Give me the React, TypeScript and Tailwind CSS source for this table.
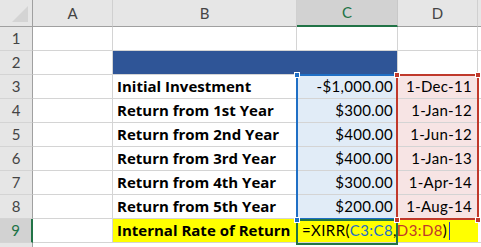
import React from 'react';

const COLS = ['A', 'B', 'C', 'D'];
const WIDTHS = [80, 184, 101, 80];

const rows = [
  { label: '', amount: '', date: '' },
  { label: '', amount: '', date: '' },
  { label: 'Initial Investment', amount: '-$1,000.00', date: '1-Dec-11' },
  { label: 'Return from 1st Year', amount: '$300.00', date: '1-Jan-12' },
  { label: 'Return from 2nd Year', amount: '$400.00', date: '1-Jun-12' },
  { label: 'Return from 3rd Year', amount: '$400.00', date: '1-Jan-13' },
  { label: 'Return from 4th Year', amount: '$300.00', date: '1-Apr-14' },
  { label: 'Return from 5th Year', amount: '$200.00', date: '1-Aug-14' },
];

const font = { fontFamily: 'Lato, "Open Sans", sans-serif' };
const boldFont = { fontFamily: '"Open Sans", Lato, sans-serif' };

const App: React.FC = () => {
  return (
    <div className="w-[481px] h-[247px] bg-white overflow-hidden text-[15px] text-black" style={font}>
      <div className="relative">
        {/* column headers */}
        <div className="flex h-[27px]">
          <div className="w-[33px] shrink-0 bg-[#e6e6e6] border-r border-b border-[#a0a0a0] relative">
            <svg className="absolute right-[4px] bottom-[4px]" width="16" height="16">
              <polygon points="16,0 16,16 0,16" fill="#d4d4d4" />
            </svg>
          </div>
          {COLS.map((c, i) => (
            <div
              key={c}
              className={
                c === 'C'
                  ? 'shrink-0 flex items-center justify-center bg-[#d2d2d2] text-[#217346] border-r border-[#c8c8c8] border-b-2 border-b-[#217346]'
                  : 'shrink-0 flex items-center justify-center bg-[#e6e6e6] text-[#444] border-r border-[#d0d0d0] border-b border-b-[#a0a0a0]'
              }
              style={{ width: WIDTHS[i] }}
            >
              {c}
            </div>
          ))}
          <div className="flex-1 bg-[#e6e6e6] border-b border-[#a0a0a0]" />
        </div>

        {rows.map((r, idx) => {
          const n = idx + 1;
          const ranged = n >= 3;
          return (
            <div key={n} className="flex h-[24px]">
              <div className="w-[33px] shrink-0 bg-[#e6e6e6] text-[#444] flex items-center justify-center border-r border-[#a0a0a0] border-b border-b-[#d4d4d4]">
                {n}
              </div>
              <div className="w-[80px] shrink-0 border-r border-b border-[#d4d4d4]" />
              <div
                className={`w-[184px] shrink-0 border-r border-b border-[#d4d4d4] flex items-center pl-[4px] font-bold whitespace-nowrap ${
                  n === 2 ? 'bg-[#2f5597] border-r-[#2f5597]' : ''
                }`}
                style={boldFont}
              >
                {r.label}
              </div>
              <div
                className={`w-[101px] shrink-0 border-r border-b border-[#d4d4d4] flex items-center justify-end pr-[4px] tracking-[0.3px] ${
                  n === 2 ? 'bg-[#2f5597] border-b-[#2f5597]' : ranged ? 'bg-[#e1ecf7]' : ''
                }`}
              >
                {r.amount}
              </div>
              <div
                className={`w-[80px] shrink-0 border-r border-b border-[#d4d4d4] flex items-center justify-end pr-[5px] tracking-[0.3px] ${
                  ranged ? 'bg-[#f7e4e4]' : ''
                }`}
              >
                {r.date}
              </div>
              <div className="flex-1 border-b border-[#d4d4d4]" />
            </div>
          );
        })}

        {/* row 9 */}
        <div className="flex h-[24px]">
          <div className="w-[33px] shrink-0 bg-[#d2d2d2] text-[#217346] flex items-center justify-center border-r-2 border-[#217346] border-b border-b-[#d4d4d4]">
            9
          </div>
          <div className="w-[80px] shrink-0 border-r border-b border-[#d4d4d4]" />
          <div
            className="w-[184px] shrink-0 bg-[#ffff00] border-r border-b border-[#d4d4d4] flex items-center pl-[4px] font-bold whitespace-nowrap"
            style={boldFont}
          >
            Internal Rate of Return
          </div>
          <div className="w-[181px] shrink-0 bg-[#ffff00] flex items-center pl-[5px] whitespace-nowrap border-b border-[#d4d4d4] tracking-[0.4px]">
            <span>=XIRR(</span>
            <span className="text-[#1f6fc5]">C3:C8</span>
            <span>,</span>
            <span className="text-[#c0392b]">D3:D8</span>
            <span>)</span>
            <span className="inline-block w-[1px] h-[18px] bg-[#1f3fc5] ml-[2px]" />
          </div>
          <div className="flex-1 border-b border-[#d4d4d4]" />
        </div>
        <div className="flex h-[24px]">
          <div className="w-[33px] shrink-0 bg-[#e6e6e6] border-r border-[#a0a0a0]" />
        </div>

        {/* C3:C8 range highlight */}
        <div className="absolute left-[296px] top-[74px] w-[102px] h-[146px] border-2 border-[#1f6fc5] border-r-0 pointer-events-none" />
        {/* D3:D8 range highlight */}
        <div className="absolute left-[396px] top-[74px] w-[83px] h-[146px] border-2 border-[#c0392b] pointer-events-none" />
        {/* active cell C9 */}
        <div className="absolute left-[296px] top-[219px] w-[102px] h-[26px] border-2 border-[#217346] pointer-events-none" />

        {/* handles */}
        <div className="absolute left-[294px] top-[72px] w-[6px] h-[6px] bg-[#1f6fc5] border border-white" />
        <div className="absolute left-[394px] top-[72px] w-[6px] h-[6px] bg-[#c0392b] border border-white" />
        <div className="absolute left-[475px] top-[72px] w-[6px] h-[6px] bg-[#c0392b] border border-white" />
        <div className="absolute left-[294px] top-[217px] w-[6px] h-[6px] bg-[#1f6fc5] border border-white" />
        <div className="absolute left-[394px] top-[217px] w-[6px] h-[6px] bg-[#c0392b] border border-white" />
        <div className="absolute left-[475px] top-[217px] w-[6px] h-[6px] bg-[#c0392b] border border-white" />
      </div>
    </div>
  );
};

export default App;
